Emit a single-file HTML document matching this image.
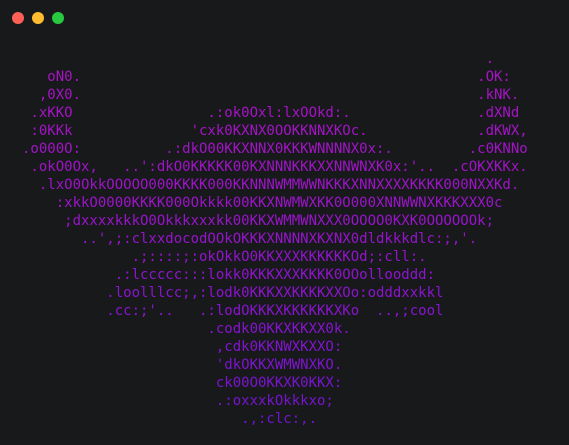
<!DOCTYPE html>
<html><head><meta charset="utf-8"><style>
html,body{margin:0;padding:0;background:#18191b;width:569px;height:445px;overflow:hidden}
.d{position:absolute;top:12px;width:12px;height:12px;border-radius:50%}
pre{position:absolute;left:22px;top:50px;margin:0;font-family:"DejaVu Sans Mono","Liberation Mono",monospace;font-size:14px;line-height:18px;white-space:pre}
</style></head><body>
<div class="d" style="left:12px;background:#fe5f57"></div>
<div class="d" style="left:32px;background:#febc2e"></div>
<div class="d" style="left:52px;background:#28c840"></div>
<pre><span style="color:#a814c2">                                                       .</span>
<span style="color:#a714c3">   oN0.                                               .OK:</span>
<span style="color:#a614c4">  ,0X0.                                               .kNK.</span>
<span style="color:#a514c5"> .xKKO                .:ok0Oxl:lxOOkd:.               .dXNd</span>
<span style="color:#a414c6"> :0KKk              'cxk0KXNX0OOKKNNXKOc.             .dKWX,</span>
<span style="color:#a214c7">.o000O:          .:dkO00KKXNNX0KKKWNNNNX0x:.         .c0KNNo</span>
<span style="color:#a014c8"> .okO0Ox,   ..':dkO0KKKKK00KXNNNKKKXXNNWNXK0x:'..  .cOKXKKx.</span>
<span style="color:#9e14c9">  .lxO0OkkOOOOO000KKKK000KKNNNWMMWWNKKKXNNXXXXKKKK000NXXKd.</span>
<span style="color:#9c14ca">    :xkkO0000KKKK000Okkkk00KKXNWMWXKK0O000XNNWWNXKKKXXX0c</span>
<span style="color:#9914cb">     ;dxxxxkkkO0Okkkxxxkk00KKXWMMWNXXX0OOOO0KXK0OOOOOOk;</span>
<span style="color:#9614cc">       ..',;:clxxdocodOOkOKKKXNNNNXKXNX0dldkkkdlc:;,'.</span>
<span style="color:#9214cd">             .;::::;:okOkkO0KKXXXKKKKKKOd;:cll:.</span>
<span style="color:#8f14ce">           .:lccccc:::lokk0KKKXXXKKKK0OOollooddd:</span>
<span style="color:#8c14cf">          .loolllcc;,:lodk0KKKXXKKKKXXOo:odddxxkkl</span>
<span style="color:#8914d0">          .cc:;'..   .:lodOKKKXKKKKKKXKo  ..,;cool</span>
<span style="color:#8514d0">                      .codk00KKXKKXX0k.</span>
<span style="color:#8214d0">                       ,cdk0KKNWXKXXO:</span>
<span style="color:#7e14d0">                       'dkOKKXWMWNXKO.</span>
<span style="color:#7a14cf">                       ck00O0KKXK0KKX:</span>
<span style="color:#7614ce">                       .:oxxxkOkkkxo;</span>
<span style="color:#7214cd">                          .,:clc:,.</span></pre>
</body></html>
